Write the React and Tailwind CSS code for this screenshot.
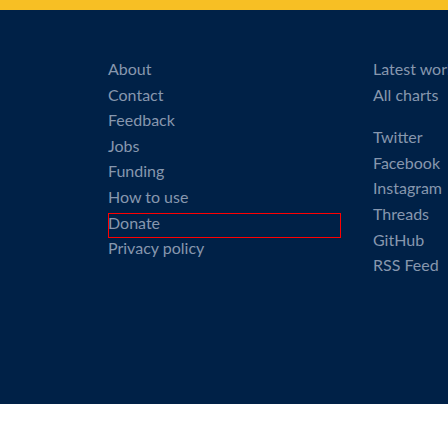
import React from 'react';

const leftLinks = ['About', 'Contact', 'Feedback', 'Jobs', 'Funding', 'How to use', 'Donate', 'Privacy policy'];
const topLinks = ['Latest works', 'All charts'];
const socialLinks = ['Twitter', 'Facebook', 'Instagram', 'Threads', 'GitHub', 'RSS Feed'];

const App = () => {
  return (
    <div className="w-[448px] h-[448px] overflow-hidden bg-white" style={{ fontFamily: 'Lato, "Open Sans", sans-serif' }}>
      <div className="h-[10px] bg-[#f7bf24]"></div>
      <footer className="h-[394px] bg-[#002147] pt-[46px] pl-[108px] flex gap-8 text-[16px] leading-[25.6px] text-[#8797ae] whitespace-nowrap">
        <ul className="w-[233px] shrink-0">
          {leftLinks.map((label) => (
            <li key={label} className="relative">
              <a href="#">{label}</a>
              {label === 'Donate' && (
                <span className="absolute left-0 top-[3px] w-[233px] h-[25px] border border-[#ff0000]"></span>
              )}
            </li>
          ))}
        </ul>
        <div className="shrink-0">
          <ul>
            {topLinks.map((label) => (
              <li key={label}><a href="#">{label}</a></li>
            ))}
          </ul>
          <ul className="mt-[17px]">
            {socialLinks.map((label) => (
              <li key={label}><a href="#">{label}</a></li>
            ))}
          </ul>
        </div>
      </footer>
    </div>
  );
};

export default App;
